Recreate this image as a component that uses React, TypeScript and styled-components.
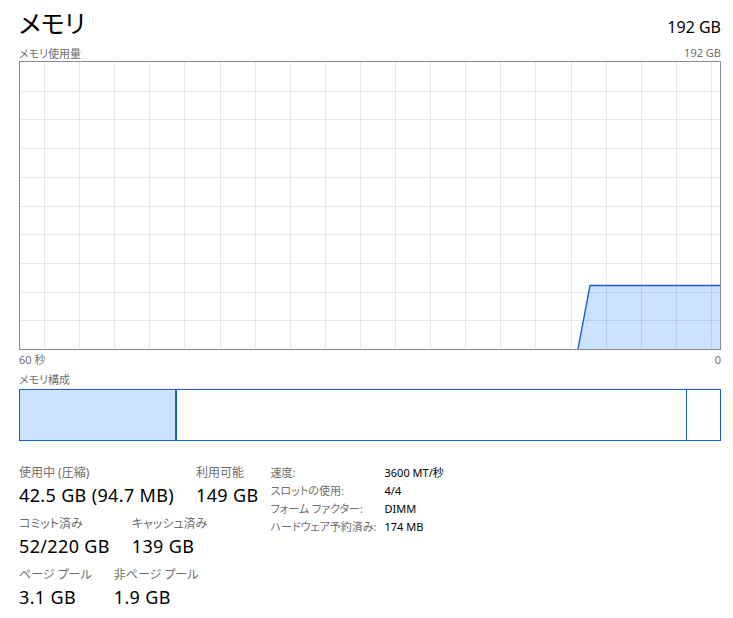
import styled, { createGlobalStyle } from 'styled-components'

const GlobalStyle = createGlobalStyle`
    html, body {
        margin: 0;
        padding: 0;
        background: #fff;
    }
    body {
        font-family: "Noto Sans", "Noto Sans CJK JP", sans-serif;
        font-feature-settings: "palt";
        color: #000;
    }
`

const Page = styled.div`
    width: 733px;
    height: 618px;
    box-sizing: border-box;
    padding: 0 12px 0 19px;
    overflow: hidden;
`

const Header = styled.div`
    display: flex;
    justify-content: space-between;
    align-items: baseline;
    height: 44px;
`

const Title = styled.h1`
    margin: 0;
    font-weight: 400;
    font-size: 25px;
    line-height: 44px;
    font-family: "Noto Sans CJK JP", sans-serif;
    font-feature-settings: "palt";
`

const Total = styled.div`
    font-size: 16px;
`

const LabelRow = styled.div<{ $height: number }>`
    display: flex;
    justify-content: space-between;
    align-items: center;
    height: ${p => p.$height}px;
    font-size: 11px;
    color: #6e6e6e;
`

const ChartBox = styled.div`
    height: 289px;
    box-sizing: border-box;
    border: 1px solid #8a8a8a;
    svg {
        display: block;
    }
`

const CompBar = styled.div`
    display: flex;
    height: 52px;
    box-sizing: border-box;
    border: 1px solid #1b5fd6;
`

const Segment = styled.div<{ $fill?: boolean; $divider: number }>`
    height: 100%;
    box-sizing: border-box;
    background: ${p => (p.$fill ? '#cce1fd' : '#fff')};
    border-right: ${p => p.$divider}px solid #1b5fd6;
`

const Stats = styled.div`
    display: flex;
    gap: 12px;
    margin-top: 23px;
`

const StatGroup = styled.div`
    display: flex;
    flex-direction: column;
`

const StatRow = styled.div`
    display: flex;
    gap: 22px;
    height: 51px;
`

const Stat = styled.div`
    display: flex;
    flex-direction: column;
`

const StatLabel = styled.div`
    font-size: 12px;
    line-height: 18px;
    color: #6e6e6e;
    white-space: nowrap;
`

const StatValue = styled.div`
    font-size: 18px;
    line-height: 26px;
    letter-spacing: 0.35px;
    white-space: nowrap;
`

const Details = styled.div`
    display: grid;
    grid-template-columns: 114px auto;
    grid-auto-rows: 18px;
    align-items: center;
    align-self: flex-start;
    margin-top: -1px;
    font-size: 11px;
    white-space: nowrap;
`

const DetailKey = styled.div`
    color: #6e6e6e;
`

const DetailValue = styled.div`
    color: #000;
`

const W = 700
const H = 287

function UsageChart() {
    const cols = Array.from({ length: 20 }, (_, i) => 24 + i * 35.1).filter(x => x < W)
    const rows = Array.from({ length: 9 }, (_, i) => (i + 1) * 28.7)
    const topY = 223.5
    return (
        <ChartBox>
            <svg width={W} height={H} viewBox={`0 0 ${W} ${H}`}>
                <polygon points={`558,${H} 570,${topY} ${W},${topY} ${W},${H}`} fill="#cce1fd" />
                {cols.map(x => (
                    <line key={'c' + x} x1={Math.round(x) + 0.5} x2={Math.round(x) + 0.5} y1={0} y2={H} stroke="rgba(0,0,0,0.085)" strokeWidth={1} />
                ))}
                {rows.map(y => (
                    <line key={'r' + y} x1={0} x2={W} y1={Math.round(y) + 0.5} y2={Math.round(y) + 0.5} stroke="rgba(0,0,0,0.085)" strokeWidth={1} />
                ))}
                <polyline points={`558,${H} 570,${topY} ${W},${topY}`} fill="none" stroke="#1b5fd6" strokeWidth={1.4} />
            </svg>
        </ChartBox>
    )
}

const segments = [
    { width: 157, fill: true, divider: 2 },
    { width: 510, fill: false, divider: 1 },
    { width: 33, fill: false, divider: 0 },
]

export default function App() {
    return (
        <>
            <GlobalStyle />
            <Page>
                <Header>
                    <Title>メモリ</Title>
                    <Total>192 GB</Total>
                </Header>
                <LabelRow $height={17}>
                    <span>メモリ使用量</span>
                    <span>192 GB</span>
                </LabelRow>
                <UsageChart />
                <LabelRow $height={18}>
                    <span>60 秒</span>
                    <span>0</span>
                </LabelRow>
                <LabelRow $height={21}>
                    <span>メモリ構成</span>
                </LabelRow>
                <CompBar>
                    {segments.map((s, i) => (
                        <Segment key={i} $fill={s.fill} $divider={s.divider} style={{ width: s.width }} />
                    ))}
                </CompBar>
                <Stats>
                    <StatGroup>
                        <StatRow>
                            <Stat>
                                <StatLabel>使用中 (圧縮)</StatLabel>
                                <StatValue>42.5 GB (94.7 MB)</StatValue>
                            </Stat>
                            <Stat>
                                <StatLabel>利用可能</StatLabel>
                                <StatValue>149 GB</StatValue>
                            </Stat>
                        </StatRow>
                        <StatRow>
                            <Stat>
                                <StatLabel>コミット済み</StatLabel>
                                <StatValue>52/220 GB</StatValue>
                            </Stat>
                            <Stat>
                                <StatLabel>キャッシュ済み</StatLabel>
                                <StatValue>139 GB</StatValue>
                            </Stat>
                        </StatRow>
                        <StatRow>
                            <Stat>
                                <StatLabel>ページ プール</StatLabel>
                                <StatValue>3.1 GB</StatValue>
                            </Stat>
                            <Stat>
                                <StatLabel>非ページ プール</StatLabel>
                                <StatValue>1.9 GB</StatValue>
                            </Stat>
                        </StatRow>
                    </StatGroup>
                    <Details>
                        <DetailKey>速度:</DetailKey>
                        <DetailValue>3600 MT/秒</DetailValue>
                        <DetailKey>スロットの使用:</DetailKey>
                        <DetailValue>4/4</DetailValue>
                        <DetailKey>フォーム ファクター:</DetailKey>
                        <DetailValue>DIMM</DetailValue>
                        <DetailKey>ハードウェア予約済み:</DetailKey>
                        <DetailValue>174 MB</DetailValue>
                    </Details>
                </Stats>
            </Page>
        </>
    )
}
